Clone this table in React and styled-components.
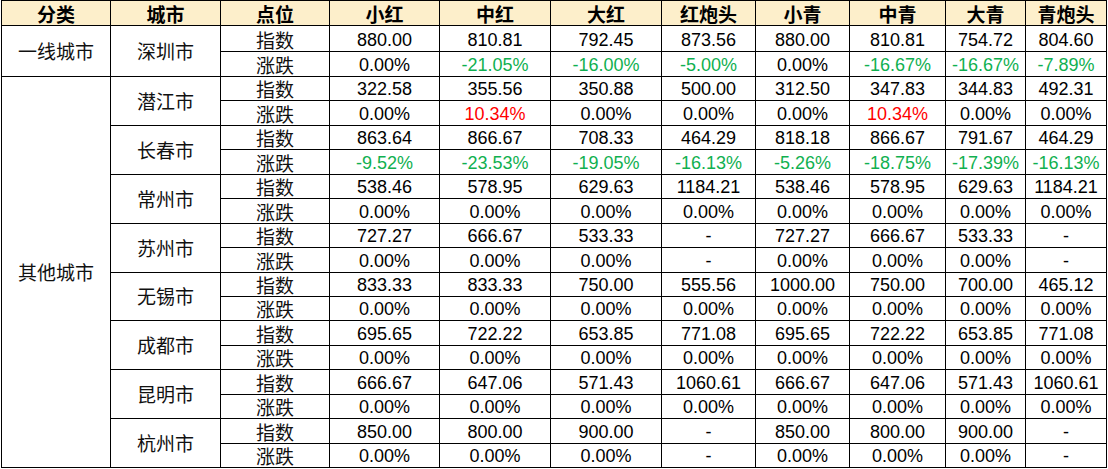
import React from 'react';
import styled, { createGlobalStyle } from 'styled-components';

const GlobalStyle = createGlobalStyle`
  body {
    margin: 0;
    background: #fff;
    font-family: "Liberation Sans", "Noto Sans CJK SC", sans-serif;
  }
`;

const COLS = [109, 110, 109, 110, 111, 111, 94, 94, 96, 80, 81];
const HEADS = ['分类', '城市', '点位', '小红', '中红', '大红', '红炮头', '小青', '中青', '大青', '青炮头'];

const g = v => ({ v, tone: 'down' });
const r = v => ({ v, tone: 'up' });
const zeros = Array(8).fill('0.00%');

const cities = [
  {
    name: '深圳市',
    group: '一线城市',
    h: 25.5,
    index: ['880.00', '810.81', '792.45', '873.56', '880.00', '810.81', '754.72', '804.60'],
    change: ['0.00%', g('-21.05%'), g('-16.00%'), g('-5.00%'), '0.00%', g('-16.67%'), g('-16.67%'), g('-7.89%')],
  },
  {
    name: '潜江市',
    group: '其他城市',
    index: ['322.58', '355.56', '350.88', '500.00', '312.50', '347.83', '344.83', '492.31'],
    change: ['0.00%', r('10.34%'), '0.00%', '0.00%', '0.00%', r('10.34%'), '0.00%', '0.00%'],
  },
  {
    name: '长春市',
    index: ['863.64', '866.67', '708.33', '464.29', '818.18', '866.67', '791.67', '464.29'],
    change: ['-9.52%', '-23.53%', '-19.05%', '-16.13%', '-5.26%', '-18.75%', '-17.39%', '-16.13%'].map(g),
  },
  {
    name: '常州市',
    index: ['538.46', '578.95', '629.63', '1184.21', '538.46', '578.95', '629.63', '1184.21'],
    change: zeros,
  },
  {
    name: '苏州市',
    index: ['727.27', '666.67', '533.33', '-', '727.27', '666.67', '533.33', '-'],
    change: ['0.00%', '0.00%', '0.00%', '-', '0.00%', '0.00%', '0.00%', '-'],
  },
  {
    name: '无锡市',
    index: ['833.33', '833.33', '750.00', '555.56', '1000.00', '750.00', '700.00', '465.12'],
    change: zeros,
  },
  {
    name: '成都市',
    index: ['695.65', '722.22', '653.85', '771.08', '695.65', '722.22', '653.85', '771.08'],
    change: zeros,
  },
  {
    name: '昆明市',
    index: ['666.67', '647.06', '571.43', '1060.61', '666.67', '647.06', '571.43', '1060.61'],
    change: zeros,
  },
  {
    name: '杭州市',
    index: ['850.00', '800.00', '900.00', '-', '850.00', '800.00', '900.00', '-'],
    change: ['0.00%', '0.00%', '0.00%', '-', '0.00%', '0.00%', '0.00%', '-'],
  },
];

const Wrap = styled.div`
  padding-left: 1px;
`;

const Table = styled.table`
  border-collapse: collapse;
  table-layout: fixed;
  width: 1105px;
  color: #000;

  td,
  th {
    border: 1px solid #000;
    padding: 0;
    text-align: center;
    white-space: nowrap;
  }
`;

const Row = styled.tr`
  height: ${p => p.$h}px;
`;

const HeadCell = styled.th`
  background: #fdefcb;
  font-family: "Noto Sans CJK SC", sans-serif;
  font-size: 19px;
  font-weight: 700;
  line-height: 20px;
  vertical-align: bottom;
  padding-bottom: 1px !important;
`;

const GroupCell = styled.td`
  font-family: "Noto Sans CJK SC", sans-serif;
  font-size: 19px;
  line-height: 20px;
  vertical-align: middle;
  color: #111;
`;

const LabelCell = styled.td`
  font-family: "Noto Sans CJK SC", sans-serif;
  font-size: 19px;
  line-height: 20px;
  vertical-align: bottom;
  padding-bottom: 1px !important;
  color: #111;
`;

const NumCell = styled.td`
  font-size: 18px;
  line-height: 18px;
  vertical-align: bottom;
  padding-bottom: 2px !important;
  color: ${p => (p.$tone === 'down' ? '#10b050' : p.$tone === 'up' ? '#ff0000' : '#000')};
`;

const cellOf = (c, i) => {
  const item = typeof c === 'string' ? { v: c } : c;
  return (
    <NumCell key={i} $tone={item.tone}>
      {item.v}
    </NumCell>
  );
};

export default function App() {
  const rowH = 24.44;
  return (
    <Wrap>
      <GlobalStyle />
      <Table>
        <colgroup>
          {COLS.map((w, i) => (
            <col key={i} style={{ width: w }} />
          ))}
        </colgroup>
        <thead>
          <Row $h={25}>
            {HEADS.map(h => (
              <HeadCell key={h}>{h}</HeadCell>
            ))}
          </Row>
        </thead>
        <tbody>
          {cities.map(city => (
            <React.Fragment key={city.name}>
              <Row $h={city.h || rowH}>
                {city.group && (
                  <GroupCell rowSpan={city.group === '一线城市' ? 2 : 16}>{city.group}</GroupCell>
                )}
                <GroupCell rowSpan={2}>{city.name}</GroupCell>
                <LabelCell>指数</LabelCell>
                {city.index.map(cellOf)}
              </Row>
              <Row $h={city.h || rowH}>
                <LabelCell>涨跌</LabelCell>
                {city.change.map(cellOf)}
              </Row>
            </React.Fragment>
          ))}
        </tbody>
      </Table>
    </Wrap>
  );
}
